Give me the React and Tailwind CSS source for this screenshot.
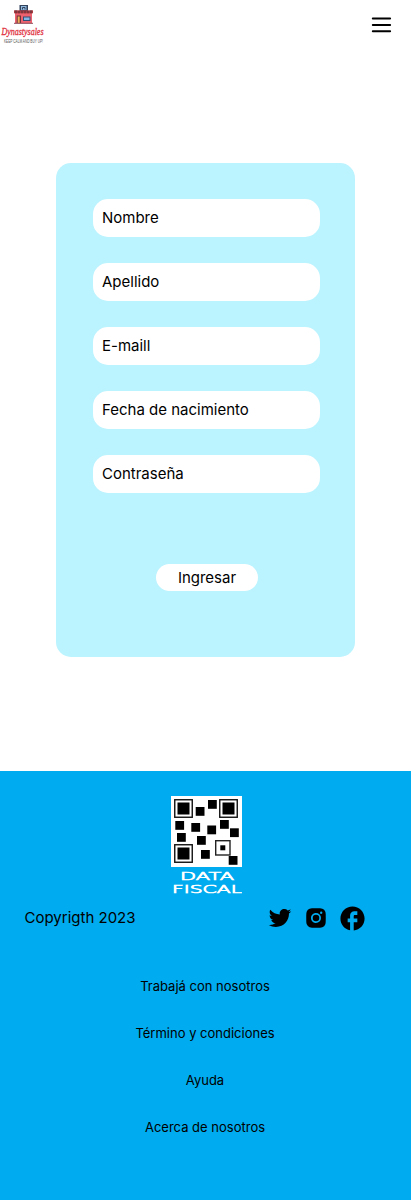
import React from "react";
import { BiLogoInstagramAlt } from "react-icons/bi";
import { IoLogoTwitter } from "react-icons/io5";
import { MdFacebook } from "react-icons/md";

const fields = ["Nombre", "Apellido", "E-maill", "Fecha de nacimiento", "Contraseña"];
const links = ["Trabajá con nosotros", "Término y condiciones", "Ayuda", "Acerca de nosotros"];

const finders = [[3, 3], [48, 3], [3, 48]];
const modules = [
  [24.7, 11], [37, 4], [4.3, 25], [20.3, 27], [6, 37], [36.3, 29.5],
  [49, 24], [59, 32.3], [26, 40], [30, 54], [57.7, 60],
];

function StoreLogo() {
  return (
    <svg className="block overflow-visible" width="50" height="50" viewBox="0 0 50 50" aria-label="Dynastysales">
      <rect x="19.500" y="5" width="8.500" height="6" fill="#34435c" />
      <rect x="21" y="6" width="5.500" height="4" fill="#8fb9df" />
      <path d="M22.500 9.500V7.500h2.500v2" stroke="#34435c" fill="none" />
      <path d="M15 13h17v10.300H15z" fill="#ee6270" />
      <path d="M14 10.300h19v3H14z" fill="#a83c42" />
      <path d="M16 10.300v3M19 11v2.300M22 11v2.300M25 11v2.300M28 11v2.300M31 10.300v3" stroke="#593039" strokeWidth="1" />
      <rect x="16.700" y="15.500" width="4.300" height="7.500" fill="#6a3438" />
      <rect x="17.700" y="16.500" width="2" height="6.500" fill="#efb15c" />
      <rect x="23" y="16.500" width="7.500" height="4.500" fill="#344f75" />
      <rect x="24" y="17.500" width="5.500" height="2.500" fill="#83b6e5" />
      <path d="M14 23.300h19" stroke="#8b4b58" />
      <text x="1.500" y="34.700" textLength="42" lengthAdjust="spacingAndGlyphs" fill="#df2f3d" stroke="#df2f3d" strokeWidth=".3" className="font-['Liberation_Serif',serif] text-[11px] italic">Dynastysales</text>
      <text x="4" y="42.500" textLength="39" lengthAdjust="spacingAndGlyphs" fill="#555" className="font-['Liberation_Sans',sans-serif] text-[4.5px]">KEEP CALM AND BUY UP!</text>
    </svg>
  );
}

function FiscalCode() {
  return (
    <svg className="ml-px block" width="71" height="100" viewBox="0 0 71 100" aria-label="Data fiscal">
      <rect width="71" height="71" fill="#fff" />
      {finders.map(([x, y]) => (
        <g key={`${x}-${y}`}>
          <rect x={x + 0.75} y={y + 0.75} width="17.5" height="17.5" fill="none" stroke="#111" strokeWidth="1.4" />
          <rect x={x + 3.5} y={y + 3.5} width="12" height="12" />
        </g>
      ))}
      {modules.map(([x, y]) => <rect key={`${x}-${y}`} x={x} y={y} width="8.8" height="8.8" />)}
      <rect x="44.7" y="44.7" width="14.3" height="14.3" fill="#fff" stroke="#222" strokeWidth="1.4" />
      <rect x="49.3" y="49.3" width="5" height="5" />
      <text x="9" y="84.3" textLength="54" lengthAdjust="spacingAndGlyphs" fill="#fff" stroke="#fff" strokeWidth=".7" className="font-['DejaVu_Sans',sans-serif] text-[11px] font-extralight">DATA</text>
      <text x="1" y="97" textLength="70" lengthAdjust="spacingAndGlyphs" fill="#fff" stroke="#fff" strokeWidth=".7" className="font-['DejaVu_Sans',sans-serif] text-[11px] font-extralight">FISCAL</text>
    </svg>
  );
}

export default function App() {
  return (
    <div className="flex h-[1200px] w-[411px] flex-col bg-white font-[Inter,sans-serif] text-black">
      <header className="flex h-[50px] items-start justify-between">
        <StoreLogo />
        <button className="mt-[13px] mr-[18px]" aria-label="Menú">
          <svg className="block" width="24" height="24" viewBox="0 0 24 24" fill="none" stroke="#000" strokeWidth="2" strokeLinecap="round">
            <path d="M3.8 5.6h17.3M3.8 11.9h17.3M3.8 18.2h17.3" />
          </svg>
        </button>
      </header>
      <main className="h-[721px] px-14 pt-[113px]">
        <form className="flex h-[494px] w-[299px] flex-col rounded-[15px] bg-[#bbf3ff] pt-9 pl-[37px]">
          <div className="flex flex-col gap-[26px]">
            {fields.map((label) => (
              <label key={label} className="flex h-[38px] w-[227px] items-center rounded-[15px] bg-white pl-[9px] text-[15px]">{label}</label>
            ))}
          </div>
          <button type="button" className="mt-[71px] ml-[63px] h-[27px] w-[102px] rounded-[15px] bg-white pt-0.5 text-[15px]">Ingresar</button>
        </form>
      </main>
      <footer className="flex h-[429px] flex-col items-center bg-[#00abef] pt-[25px]">
        <FiscalCode />
        <div className="flex h-11 w-full items-center justify-between pr-[45px] pl-[24.5px]">
          <p className="text-[15px]">Copyrigth 2023</p>
          <div className="flex items-center">
            <IoLogoTwitter className="mr-[11px] size-6" />
            <BiLogoInstagramAlt className="mr-[9px] size-[26px]" />
            <MdFacebook className="-mr-px size-[29px]" />
          </div>
        </div>
        <nav className="mt-9 flex flex-col items-center gap-[27px] pr-px text-[13px] leading-5">
          {links.map((link) => <a key={link}>{link}</a>)}
        </nav>
      </footer>
    </div>
  );
}
